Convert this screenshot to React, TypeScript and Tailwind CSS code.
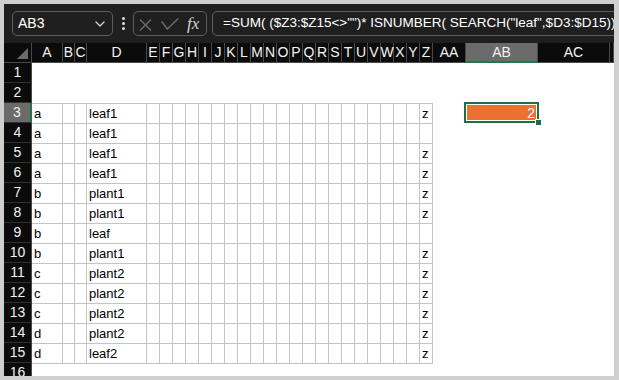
import React from "react";

const letters = [
  "A","B","C","D","E","F","G","H","I","J","K","L","M","N","O","P","Q","R","S","T","U","V","W","X","Y","Z","AA","AB","AC","",
];

const data: Record<number, [string, string, string]> = {
  3: ["a", "leaf1", "z"],
  4: ["a", "leaf1", ""],
  5: ["a", "leaf1", "z"],
  6: ["a", "leaf1", "z"],
  7: ["b", "plant1", "z"],
  8: ["b", "plant1", "z"],
  9: ["b", "leaf", ""],
  10: ["b", "plant1", "z"],
  11: ["c", "plant2", "z"],
  12: ["c", "plant2", "z"],
  13: ["c", "plant2", "z"],
  14: ["d", "plant2", "z"],
  15: ["d", "leaf2", "z"],
};

const font = { fontFamily: '"Liberation Sans", Arial, sans-serif' };

function RowCells({ r }: { r: number }) {
  const cells: React.ReactNode[] = [];
  const selected = r === 3;
  cells.push(
    <div
      key="h"
      className={
        "flex items-center justify-center text-[14px] text-[#f2f2f2] border-b border-[#303030] " +
        (selected ? "bg-[#6b6b6b] border-r-2 border-r-[#1f7a45]" : "bg-[#0b0b0b] border-r border-r-[#4a4a4a]")
      }
    >
      {r}
    </div>
  );
  for (let c = 0; c < letters.length; c++) {
    const inTable = c <= 25;
    let cls = "relative whitespace-nowrap text-[13px] leading-[19px] text-black pl-[2px] bg-white";
    if (inTable && r >= 3 && r <= 15) cls += " border-t border-r border-[#c4c4c4]";
    if (inTable && r === 16) cls += " border-t border-[#c4c4c4]";
    let content: React.ReactNode = null;
    const d = data[r];
    if (d) {
      if (c === 0) content = d[0];
      if (c === 3) content = d[1];
      if (c === 25) content = d[2];
    }
    if (r === 3 && c === 27) {
      cells.push(
        <div key={c} className="relative z-10 bg-white">
          <div className="absolute top-[-1px] left-[-2px] right-[-1px] bottom-0 border-2 border-[#1f6e43] bg-white p-[1px]">
            <div className="h-full w-full bg-[#e97132] text-white text-[14px] leading-[16px] text-right pr-[1px]">
              2
            </div>
          </div>
          <div className="absolute right-[-4px] bottom-[-3px] w-[7px] h-[7px] bg-[#1f6e43] border border-white" />
        </div>
      );
      continue;
    }
    cells.push(
      <div key={c} className={cls}>
        {content}
      </div>
    );
  }
  return <>{cells}</>;
}

export default function App() {
  return (
    <div className="w-[619px] h-[380px] bg-[#cfcfcf] pt-[4px] pl-[4px] pr-[5px] pb-[4px]" style={font}>
      <div className="w-full h-full flex flex-col overflow-hidden bg-white">
        {/* Formula bar */}
        <div className="h-[39px] shrink-0 bg-[#1f1f1f] flex items-center pl-[8px] overflow-hidden">
          <div className="w-[101px] h-[25px] shrink-0 rounded-[5px] border border-[#5e5e5e] flex items-center justify-between pl-[5px] pr-[7px] text-[14px] text-white">
            <span>AB3</span>
            <svg width="10" height="6" viewBox="0 0 10 6" fill="none">
              <path d="M1 1 L5 5 L9 1" stroke="#d0d0d0" strokeWidth="1.4" strokeLinecap="round" strokeLinejoin="round" />
            </svg>
          </div>
          <div className="ml-[8px] w-[4px] shrink-0 flex flex-col items-center gap-[2px]">
            <div className="w-[3px] h-[3px] rounded-full bg-[#e0e0e0]" />
            <div className="w-[3px] h-[3px] rounded-full bg-[#e0e0e0]" />
            <div className="w-[3px] h-[3px] rounded-full bg-[#e0e0e0]" />
          </div>
          <div className="ml-[8px] w-[74px] h-[25px] shrink-0 rounded-[5px] border border-[#5e5e5e] flex items-center">
            <svg className="ml-[5px] mt-[2px]" width="13" height="12" viewBox="0 0 13 12" fill="none">
              <path d="M1 0.5 L12 11.5 M12 0.5 L1 11.5" stroke="#6f6f6f" strokeWidth="1.3" />
            </svg>
            <svg className="ml-[9px] mt-[1px]" width="18" height="12" viewBox="0 0 18 12" fill="none">
              <path d="M0.7 3.5 L6.3 11 L17.3 0.5" stroke="#6f6f6f" strokeWidth="1.3" />
            </svg>
            <span
              className="ml-[8px] text-[17px] italic text-[#d4d4d4] leading-none"
              style={{ fontFamily: '"Liberation Serif", "Times New Roman", serif' }}
            >
              fx
            </span>
          </div>
          <div className="ml-[5px] w-[440px] h-[25px] shrink-0 rounded-[5px] border border-[#5e5e5e] flex items-center pl-[10px] text-[13.5px] text-white whitespace-nowrap">
            =SUM( ($Z3:$Z15&lt;&gt;"")* ISNUMBER( SEARCH("leaf",$D3:$D15))
          </div>
        </div>

        {/* Sheet */}
        <div className="flex-1 overflow-hidden">
          <div className="grid grid-cols-[28px_31px_12px_12px_60px_repeat(22,13px)_33px_72px_72px_1fr] auto-rows-[20px]">
            {/* header row */}
            <div className="bg-[#0b0b0b] border-r border-b border-[#4a4a4a] relative">
              <svg className="absolute right-[3px] bottom-[3px]" width="11" height="11" viewBox="0 0 11 11">
                <polygon points="11,0 11,11 0,11" fill="#6b6b6b" />
              </svg>
            </div>
            {letters.map((l, i) => (
              <div
                key={i}
                className={
                  "flex items-center justify-center text-[14px] text-[#f2f2f2] whitespace-nowrap " +
                  (l === "AB"
                    ? "bg-[#6b6b6b] border-r border-r-[#4a4a4a] border-b-2 border-b-[#1f7a45]"
                    : "bg-[#0b0b0b] border-r border-b border-[#4a4a4a]")
                }
              >
                {l}
              </div>
            ))}
            {Array.from({ length: 16 }, (_, i) => (
              <RowCells key={i} r={i + 1} />
            ))}
          </div>
        </div>
      </div>
    </div>
  );
}
